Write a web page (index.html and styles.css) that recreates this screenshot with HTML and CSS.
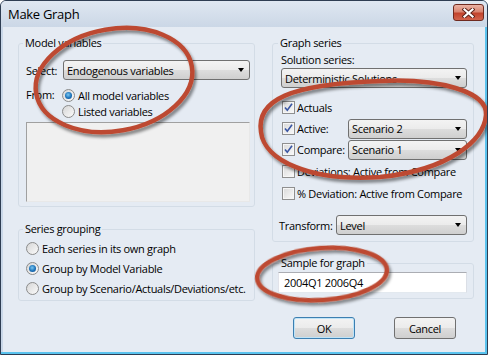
FILE: index.html
```html
<!DOCTYPE html>
<html lang="en">
<head>
    <meta charset="UTF-8">
    <title>Make Graph</title>
    <link rel="stylesheet" href="styles.css">
</head>
<body>
    <div class="window">
        <div class="titlebar">
            <span class="title">Make Graph</span>
            <span class="close">
                <svg width="13" height="10" viewBox="0 0 13 10">
                    <path d="M2.5 1.5 L10.5 8.5 M10.5 1.5 L2.5 8.5" stroke="#5a2118" stroke-width="4" stroke-linecap="square"/>
                    <path d="M2.5 1.5 L10.5 8.5 M10.5 1.5 L2.5 8.5" stroke="#fff" stroke-width="2.2" stroke-linecap="square"/>
                </svg>
            </span>
        </div>

        <div class="client">
            <div class="col left">
                <fieldset class="group model">
                    <legend>Model variables</legend>
                    <div class="row">
                        <span class="lbl">Select:</span>
                        <div class="combo"><span>Endogenous variables</span><i class="arrow"></i></div>
                    </div>
                    <div class="from">
                        <span class="lbl from-lbl">From:</span>
                        <div class="opts">
                            <div class="opt"><span class="radio on"></span>All model variables</div>
                            <div class="opt"><span class="radio"></span>Listed variables</div>
                        </div>
                    </div>
                    <div class="listbox"></div>
                </fieldset>

                <fieldset class="group grouping">
                    <legend>Series grouping</legend>
                    <div class="opt tall"><span class="radio"></span>Each series in its own graph</div>
                    <div class="opt tall"><span class="radio on"></span>Group by Model Variable</div>
                    <div class="opt tall"><span class="radio"></span>Group by Scenario/Actuals/Deviations/etc.</div>
                </fieldset>
            </div>

            <div class="col right">
                <fieldset class="group series">
                    <legend>Graph series</legend>
                    <div class="caption">Solution series:</div>
                    <div class="combo"><span>Deterministic Solutions</span><i class="arrow"></i></div>

                    <div class="checks">
                        <div class="chk-row">
                            <span class="check on"><svg width="11" height="11" viewBox="0 0 11 11"><path d="M2 5.5 L4.3 8.3 L9 1.8" fill="none" stroke="#3a56a3" stroke-width="1.6"/></svg></span>
                            Actuals
                        </div>
                        <div class="chk-row">
                            <span class="check on"><svg width="11" height="11" viewBox="0 0 11 11"><path d="M2 5.5 L4.3 8.3 L9 1.8" fill="none" stroke="#3a56a3" stroke-width="1.6"/></svg></span>
                            <span class="chk-lbl">Active:</span>
                            <div class="combo"><span>Scenario 2</span><i class="arrow"></i></div>
                        </div>
                        <div class="chk-row">
                            <span class="check on"><svg width="11" height="11" viewBox="0 0 11 11"><path d="M2 5.5 L4.3 8.3 L9 1.8" fill="none" stroke="#3a56a3" stroke-width="1.6"/></svg></span>
                            <span class="chk-lbl">Compare:</span>
                            <div class="combo"><span>Scenario 1</span><i class="arrow"></i></div>
                        </div>
                        <div class="chk-row wide"><span class="check"></span>Deviations: Active from Compare</div>
                        <div class="chk-row wide"><span class="check"></span>% Deviation: Active from Compare</div>
                    </div>

                    <div class="row transform">
                        <span class="tf-lbl">Transform:</span>
                        <div class="combo"><span>Level</span><i class="arrow"></i></div>
                    </div>
                </fieldset>

                <fieldset class="group sample">
                    <legend>Sample for graph</legend>
                    <div class="entry">2004Q1 2006Q4</div>
                </fieldset>

                <div class="buttons">
                    <div class="btn default">OK</div>
                    <div class="btn">Cancel</div>
                </div>
            </div>
        </div>

        <!-- hand-drawn red circles over the screenshot -->
        <svg class="marks" width="488" height="355" viewBox="0 0 488 355">
            <defs>
                <filter id="shade" x="-20%" y="-20%" width="140%" height="140%">
                    <feDropShadow dx="2" dy="3" stdDeviation="1.8" flood-color="#000" flood-opacity="0.45"/>
                </filter>
            </defs>
            <g fill="none" stroke="#bd4a31" stroke-width="4.5" filter="url(#shade)">
                <ellipse cx="114" cy="80" rx="79" ry="51" transform="rotate(-10 114 80)"/>
                <path d="M261 132 C256 100 290 84 380 81 C440 78 488 92 486 115 C484 140 450 170 380 177 C310 182 264 160 261 132 Z"/>
                <ellipse cx="322" cy="274" rx="65" ry="26" transform="rotate(-4 322 274)"/>
            </g>
        </svg>
    </div>
</body>
</html>
```

FILE: styles.css
```css
* {
    font-family: "Open Sans", "Noto Sans", sans-serif;
}
body {
    margin: 0;
    font-size: 11px;
    letter-spacing: -0.3px;
    color: #000;
    background: #fff;
}
.window {
    position: relative;
    width: 488px;
    height: 355px;
    box-sizing: border-box;
    border: 1px solid #2e3d52;
    border-radius: 6px 6px 0 0;
    background: #c9d7e8;
    box-shadow: inset 0 -2px #5ac3ee, inset -2px 0 #5ac3ee;
    display: flex;
    flex-direction: column;
    overflow: hidden;
}
.titlebar {
    height: 26px;
    flex: none;
    display: flex;
    align-items: center;
    justify-content: space-between;
    padding: 0 3px 0 7px;
    background: linear-gradient(#dfe7f1, #cbd7e6);
}
.title {
    font-size: 13px;
}
.close {
    align-self: flex-start;
    margin-top: 3px;
    width: 31px;
    height: 17px;
    box-sizing: border-box;
    border: 1px solid #6f2a1f;
    border-radius: 3px;
    background: linear-gradient(#ebb3a5, #d98571 45%, #c2432c 55%, #d2644d);
    display: flex;
    align-items: center;
    justify-content: center;
}
.client {
    flex: 1;
    margin: 0 2px 2px;
    background: #e5ebf3;
    display: flex;
    gap: 17px;
    padding: 8px 11px 0 15px;
}
.col {
    display: flex;
    flex-direction: column;
}
.col.left {
    width: 237px;
}
.col.right {
    width: 202px;
}
.group {
    margin: 0;
    box-sizing: border-box;
    min-width: 0;
    border: 1px solid #d3dce6;
    border-radius: 3px;
}
.group legend {
    padding: 0 2px;
    margin-left: -3px;
    line-height: 16px;
}
.model {
    padding: 9px 4px 4px 7px;
}
.grouping {
    margin-top: 14px;
    padding: 1px 4px 2px 7px;
}
.row {
    display: flex;
    align-items: center;
}
.lbl {
    width: 37px;
    flex: none;
}
.from-lbl {
    width: 36px;
    line-height: 16px;
    align-self: flex-start;
}
.from {
    display: flex;
    margin-top: 7px;
}
.opt {
    display: flex;
    align-items: center;
    gap: 3px;
    height: 16px;
    white-space: nowrap;
}
.opt.tall {
    height: 20px;
}
.radio {
    width: 13px;
    height: 13px;
    flex: none;
    box-sizing: border-box;
    border: 1px solid #8b8b8b;
    border-radius: 50%;
    background: linear-gradient(135deg, #d6d6d6, #fbfbfb);
    display: flex;
    align-items: center;
    justify-content: center;
}
.radio.on::after {
    content: "";
    width: 7px;
    height: 7px;
    border-radius: 50%;
    background: radial-gradient(circle at 45% 40%, #7cc8f0, #1c72ba 55%, #0d4784);
}
.listbox {
    margin-top: 3px;
    height: 80px;
    box-sizing: border-box;
    border: 1px solid;
    border-color: #a0a0a0 #e8e8e8 #e8e8e8 #a0a0a0;
    background: #f0f0f0;
}
.combo {
    flex: 1;
    height: 20px;
    box-sizing: border-box;
    border: 1px solid #707070;
    border-radius: 3px;
    background: linear-gradient(#f3f3f3, #ebebeb 50%, #dddddd 50%, #cfcfcf);
    display: flex;
    align-items: center;
    padding: 0 5px 0 3px;
}
.combo span {
    flex: 1;
    white-space: nowrap;
    overflow: hidden;
}
.arrow {
    width: 0;
    height: 0;
    border-left: 3.5px solid transparent;
    border-right: 3.5px solid transparent;
    border-top: 4px solid #000;
}
.series {
    padding: 1px 6px 6px 8px;
}
.series > .combo {
    flex: none;
}
.caption {
    line-height: 16px;
}
.checks {
    margin-top: 9px;
}
.chk-row {
    display: flex;
    align-items: center;
    height: 21px;
    white-space: nowrap;
}
.chk-row.wide {
    height: 22px;
}
.check {
    width: 13px;
    height: 13px;
    flex: none;
    margin: 0 2px 0 1px;
    box-sizing: border-box;
    border: 1px solid #8f8f8f;
    background: linear-gradient(135deg, #d9d9d9, #fafafa);
    box-shadow: inset 0 0 0 1px #f6f6f6;
    display: flex;
}
.chk-lbl {
    width: 51px;
    flex: none;
}
.transform {
    margin: 11px 0 0 -2px;
}
.tf-lbl {
    width: 57px;
    flex: none;
}
.sample {
    margin-top: 13px;
    padding: 1px 6px 5px 5px;
}
.sample legend {
    margin-left: 1px;
}
.entry {
    height: 21px;
    box-sizing: border-box;
    border: 1px solid;
    border-color: #abadb3 #dbdfe6 #e3e9ef #e2e3ea;
    background: #fff;
    padding: 0 5px;
    display: flex;
    align-items: center;
}
.buttons {
    display: flex;
    justify-content: flex-end;
    gap: 39px;
    padding-right: 18px;
    margin-top: 18px;
}
.btn {
    width: 62px;
    height: 22px;
    box-sizing: border-box;
    border: 1px solid #707070;
    border-radius: 3px;
    background: linear-gradient(#f3f3f3, #ebebeb 50%, #dddddd 50%, #cfcfcf);
    display: flex;
    align-items: center;
    justify-content: center;
}
.btn.default {
    border-color: #3c7fb1;
    box-shadow: inset 0 0 0 1px #bfe3f7;
}
.marks {
    position: absolute;
    left: -1px;
    top: -1px;
    pointer-events: none;
}
```
